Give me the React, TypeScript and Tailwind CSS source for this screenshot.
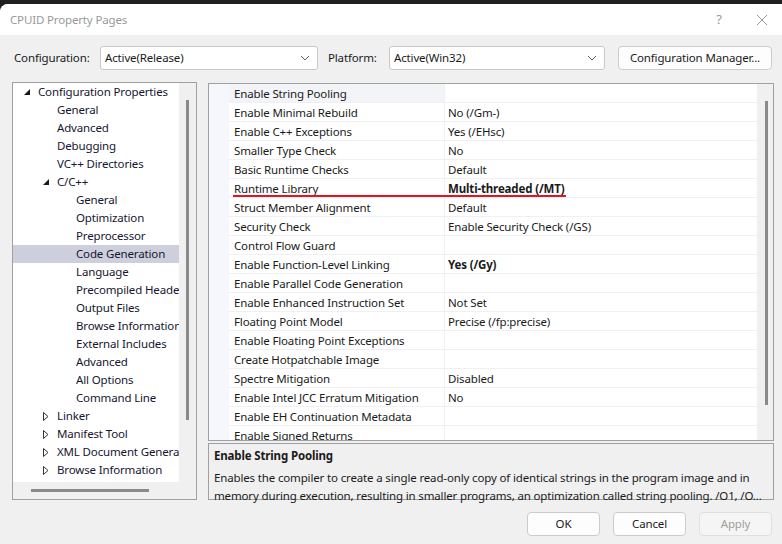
import React from "react";

const font = { fontFamily: '"Noto Sans", "Open Sans", sans-serif', letterSpacing: "-0.15px" };

type TreeItem = { label: string; level: number; exp?: "open" | "closed"; sel?: boolean };

const tree: TreeItem[] = [
  { label: "Configuration Properties", level: 0, exp: "open" },
  { label: "General", level: 1 },
  { label: "Advanced", level: 1 },
  { label: "Debugging", level: 1 },
  { label: "VC++ Directories", level: 1 },
  { label: "C/C++", level: 1, exp: "open" },
  { label: "General", level: 2 },
  { label: "Optimization", level: 2 },
  { label: "Preprocessor", level: 2 },
  { label: "Code Generation", level: 2, sel: true },
  { label: "Language", level: 2 },
  { label: "Precompiled Headers", level: 2 },
  { label: "Output Files", level: 2 },
  { label: "Browse Information", level: 2 },
  { label: "External Includes", level: 2 },
  { label: "Advanced", level: 2 },
  { label: "All Options", level: 2 },
  { label: "Command Line", level: 2 },
  { label: "Linker", level: 1, exp: "closed" },
  { label: "Manifest Tool", level: 1, exp: "closed" },
  { label: "XML Document Generator", level: 1, exp: "closed" },
  { label: "Browse Information", level: 1, exp: "closed" },
];

const props: [string, string, boolean?][] = [
  ["Enable String Pooling", ""],
  ["Enable Minimal Rebuild", "No (/Gm-)"],
  ["Enable C++ Exceptions", "Yes (/EHsc)"],
  ["Smaller Type Check", "No"],
  ["Basic Runtime Checks", "Default"],
  ["Runtime Library", "Multi-threaded (/MT)", true],
  ["Struct Member Alignment", "Default"],
  ["Security Check", "Enable Security Check (/GS)"],
  ["Control Flow Guard", ""],
  ["Enable Function-Level Linking", "Yes (/Gy)", true],
  ["Enable Parallel Code Generation", ""],
  ["Enable Enhanced Instruction Set", "Not Set"],
  ["Floating Point Model", "Precise (/fp:precise)"],
  ["Enable Floating Point Exceptions", ""],
  ["Create Hotpatchable Image", ""],
  ["Spectre Mitigation", "Disabled"],
  ["Enable Intel JCC Erratum Mitigation", "No"],
  ["Enable EH Continuation Metadata", ""],
  ["Enable Signed Returns", ""],
];

function Chevron() {
  return (
    <svg width="10" height="6" viewBox="0 0 10 6" className="shrink-0">
      <path d="M1 1 L5 5 L9 1" fill="none" stroke="#606060" strokeWidth="1" />
    </svg>
  );
}

function Combo({ value, w }: { value: string; w: string }) {
  return (
    <div className={`${w} h-[24px] bg-white border border-[#c8c8c8] rounded-[3px] flex items-center pl-[4px] pr-[7px] justify-between`}>
      <span className="text-[11.5px] text-[#1a1a1a]">{value}</span>
      <Chevron />
    </div>
  );
}

function Expander({ kind }: { kind: "open" | "closed" }) {
  if (kind === "open")
    return (
      <svg width="6" height="6" viewBox="0 0 6 6">
        <path d="M6 0 L6 6 L0 6 Z" fill="#1a1a1a" />
      </svg>
    );
  return (
    <svg width="6" height="9" viewBox="0 0 6 9">
      <path d="M0.5 0.5 L5 4.5 L0.5 8.5 Z" fill="none" stroke="#333" strokeWidth="1" />
    </svg>
  );
}

export default function App() {
  return (
    <div className="w-[782px] h-[544px] bg-[#1f1f1f] pt-[4px] overflow-hidden" style={font}>
      <div className="w-[782px] h-[540px] bg-[#f0f0f0] rounded-tl-[8px] overflow-hidden flex flex-col">
        {/* Title bar */}
        <div className="h-[31px] bg-white flex items-center pl-[10px] shrink-0">
          <span className="text-[11.5px] text-[#999999] flex-1">CPUID Property Pages</span>
          <span className="text-[13px] text-[#999999] w-[20px] text-center mr-[27px]">?</span>
          <svg width="12" height="12" viewBox="0 0 12 12" className="mr-[14px]">
            <path d="M1 1 L11 11 M11 1 L1 11" stroke="#9a9a9a" strokeWidth="1" />
          </svg>
        </div>

        {/* Configuration row */}
        <div className="flex items-center h-[24px] mt-[11px] shrink-0">
          <span className="text-[11.5px] text-[#1a1a1a] ml-[14px] w-[86px]">Configuration:</span>
          <Combo value="Active(Release)" w="w-[218px]" />
          <span className="text-[11.5px] text-[#1a1a1a] ml-[10px] w-[61px]">Platform:</span>
          <Combo value="Active(Win32)" w="w-[216px]" />
          <div className="ml-[13px] w-[154px] h-[24px] bg-[#fdfdfd] border border-[#cccccc] rounded-[4px] flex items-center justify-center text-[11.5px] text-[#1a1a1a]">
            Configuration Manager...
          </div>
        </div>

        {/* Main */}
        <div className="flex mt-[12px] ml-[12px] h-[418px] shrink-0">
          {/* Tree */}
          <div className="w-[185px] h-[418px] border border-[#a0a0a0] bg-[#f0f0f0] flex flex-col">
            <div className="flex flex-1 min-h-0">
              <div className="w-[166px] bg-white overflow-hidden">
                {tree.map((t, i) => (
                  <div
                    key={i}
                    className={`h-[18px] flex items-center whitespace-nowrap text-[11.5px] text-[#161630] ${t.sel ? "bg-[#cdd0dc]" : ""}`}
                    style={{ paddingLeft: 11 + t.level * 19 }}
                  >
                    <span className="w-[14px] flex items-center justify-start shrink-0">
                      {t.exp ? <Expander kind={t.exp} /> : null}
                    </span>
                    <span>{t.label}</span>
                  </div>
                ))}
              </div>
              <div className="w-[17px] flex justify-center pt-[17px]">
                <div className="w-[3px] h-[320px] bg-[#8a8a8a]" />
              </div>
            </div>
            <div className="h-[17px] flex items-center shrink-0">
              <div className="ml-[18px] w-[118px] h-[3px] bg-[#8a8a8a]" />
            </div>
          </div>

          {/* Right column */}
          <div className="ml-[11px] w-[566px] flex flex-col">
            <div className="mt-[1px] h-[358px] border border-[#a0a0a0] flex overflow-hidden relative">
              <div className="flex-1 bg-white overflow-hidden">
                {props.map(([n, v, b], i) => (
                  <div key={i} className="h-[19px] flex">
                    <div className="w-[20px] bg-[#f5f7fc] shrink-0" />
                    <div
                      className={`w-[215px] shrink-0 pl-[5px] pt-[2px] text-[11.5px] text-[#1a1a1a] flex items-center border-b border-[#f0f0f4] whitespace-nowrap overflow-hidden ${i === 0 ? "bg-[#f3f4f7]" : ""}`}
                    >
                      {n}
                    </div>
                    <div
                      className={`flex-1 border-l border-b border-[#f0f0f4] pl-[3px] pt-[2px] text-[11.5px] text-[#1a1a1a] flex items-center whitespace-nowrap ${b ? "font-bold" : ""}`}
                    >
                      {v}
                    </div>
                  </div>
                ))}
              </div>
              <div className="w-[16px] bg-[#f0f0f0] flex justify-center pt-[17px] shrink-0">
                <div className="w-[3px] h-[304px] bg-[#8a8a8a] ml-[2px]" />
              </div>
              <div className="absolute left-[24px] top-[111px] w-[333px] h-[2px] bg-[#e0161e]" />
            </div>
            <div className="mt-[2px] h-[57px] border border-[#a0a0a0] bg-[#f0f0f0] px-[5px] pt-[3px] text-[11.5px] text-[#1a1a1a] leading-[18px]">
              <div className="font-bold mb-[4px]">Enable String Pooling</div>
              <div className="whitespace-nowrap overflow-hidden">
                Enables the compiler to create a single read-only copy of identical strings in the program image and in
              </div>
              <div className="whitespace-nowrap overflow-hidden">
                memory during execution, resulting in smaller programs, an optimization called string pooling. /O1, /O...
              </div>
            </div>
          </div>
        </div>

        {/* Buttons */}
        <div className="flex justify-end mt-[12px] mr-[10px] gap-[13px]">
          <div className="w-[73px] h-[24px] bg-[#fdfdfd] border border-[#cccccc] rounded-[4px] flex items-center justify-center text-[11.5px] text-[#1a1a1a]">OK</div>
          <div className="w-[73px] h-[24px] bg-[#fdfdfd] border border-[#cccccc] rounded-[4px] flex items-center justify-center text-[11.5px] text-[#1a1a1a]">Cancel</div>
          <div className="w-[73px] h-[24px] bg-[#f5f5f5] border border-[#e0e0e0] rounded-[4px] flex items-center justify-center text-[11.5px] text-[#a0a0a0]">Apply</div>
        </div>
      </div>
    </div>
  );
}
